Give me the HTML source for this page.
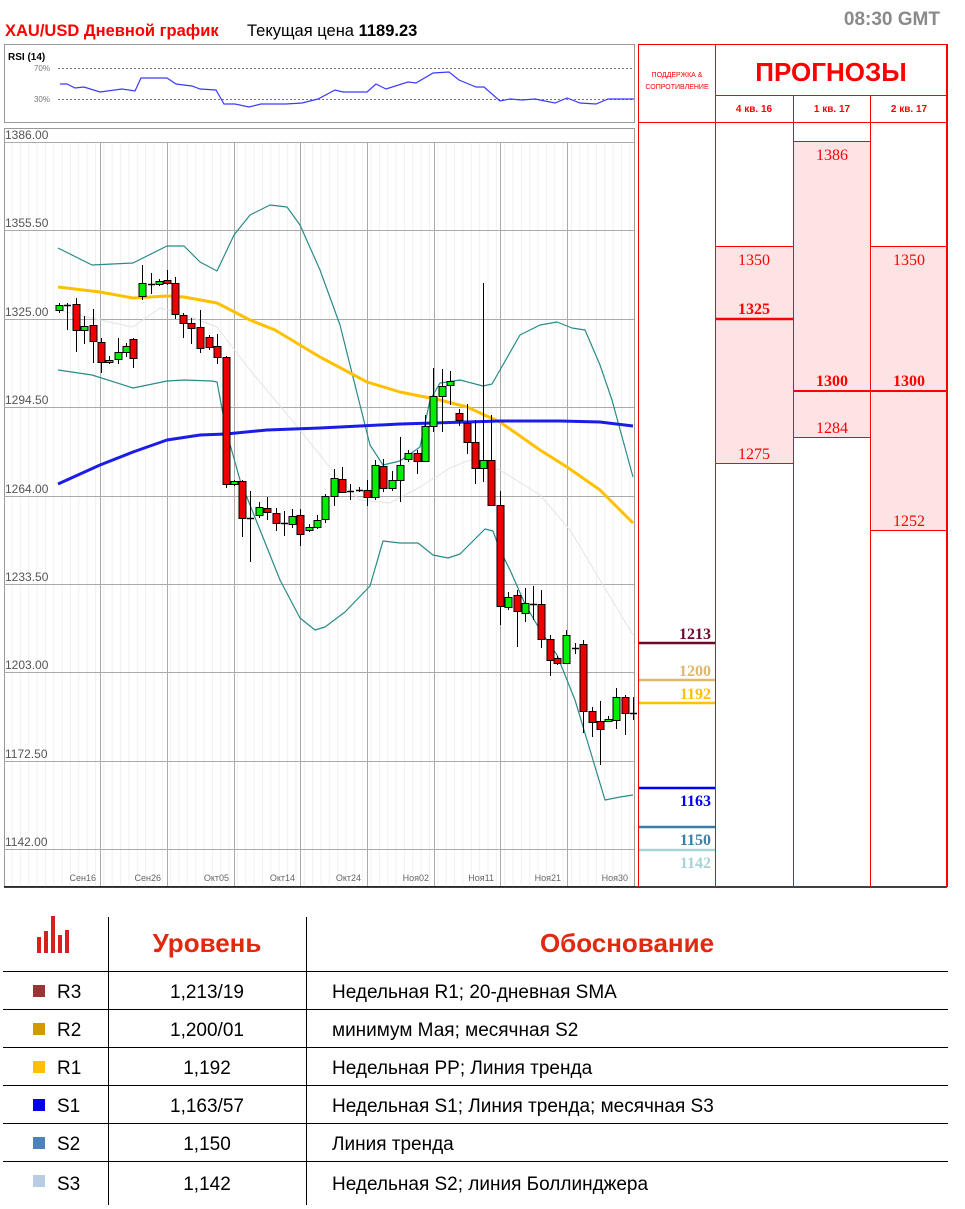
<!DOCTYPE html>
<html><head><meta charset="utf-8"><style>
html,body{margin:0;padding:0;background:#fff;width:965px;height:1209px;overflow:hidden;font-family:"Liberation Sans","DejaVu Sans",sans-serif}
svg{position:absolute;left:0;top:0}
</style></head><body>
<svg width="965" height="1209" xmlns="http://www.w3.org/2000/svg" id="s">
<text x="5" y="36" font-size="16.5" font-weight="bold" fill="#f00">XAU/USD Дневной график</text>
<text x="247" y="36" font-size="16.5" fill="#000">Текущая цена <tspan font-weight="bold">1189.23</tspan></text>
<text x="940" y="25" font-size="19" font-weight="bold" fill="#8a8a8a" text-anchor="end">08:30 GMT</text>
<!-- RSI panel -->
<rect x="4.5" y="44.5" width="630" height="78" fill="#fff" stroke="#999"/>
<text x="8" y="60" font-size="10" font-weight="bold">RSI (14)</text>
<text x="50" y="71" font-size="8" fill="#777" text-anchor="end">70%</text>
<text x="50" y="102" font-size="8" fill="#777" text-anchor="end">30%</text>
<line x1="58" y1="68.5" x2="634" y2="68.5" stroke="#777" stroke-dasharray="2,2"/>
<line x1="58" y1="99.5" x2="634" y2="99.5" stroke="#777" stroke-dasharray="2,2"/>
<polyline fill="none" stroke="#3a3aff" stroke-width="1.2" points="60,84 67,84 75,88 84,87 100,92 122,89 135,91 141,78 167,78 176,84 192,86 200,89 216,90 224,104 235,104 249,107 261,104 286,104 302,103 318,99 335,90 343,92 367,92 376,84 386,89 408,82 416,83 433,73 449,72 459,80 476,87 484,87 500,101 510,99 522,100 535,99 555,103 567,98 580,103 596,104 608,99 634,99"/>
<!-- main chart -->
<rect x="4.5" y="128.5" width="630" height="758" fill="#fff" stroke="#999"/>
<g id="grid"></g>
<g id="lines"></g>
<g id="candles"></g>
<line x1="4" y1="887" x2="947" y2="887" stroke="#000" stroke-width="1.5"/>
<!-- right panel -->
<g fill="#fde3e3">
<rect x="716" y="246" width="77" height="217"/>
<rect x="794" y="141" width="77" height="296"/>
<rect x="872" y="246" width="75" height="284"/>
</g>
<g stroke="#f00" stroke-width="1" fill="none">
<line x1="638.5" y1="44" x2="638.5" y2="887"/>
<line x1="715.5" y1="44" x2="715.5" y2="887"/>
<line x1="793.5" y1="95" x2="793.5" y2="887"/>
<line x1="870.5" y1="95" x2="870.5" y2="887"/>
<line x1="947" y1="44" x2="947" y2="887" stroke-width="2"/>
<line x1="638" y1="44.5" x2="948" y2="44.5"/>
<line x1="715" y1="95.5" x2="948" y2="95.5"/>
<line x1="638" y1="122.5" x2="948" y2="122.5"/>
<line x1="716" y1="246.5" x2="793" y2="246.5"/>
<line x1="716" y1="463.5" x2="793" y2="463.5"/>
<line x1="794" y1="141.5" x2="871" y2="141.5"/>
<line x1="794" y1="437.5" x2="871" y2="437.5"/>
<line x1="871" y1="246.5" x2="947" y2="246.5"/>
<line x1="871" y1="530.5" x2="947" y2="530.5"/>
<line x1="716" y1="319" x2="793" y2="319" stroke-width="2.5"/>
<line x1="794" y1="391" x2="947" y2="391" stroke-width="2"/>
</g>
<g fill="#f00" text-anchor="middle">
<text x="677" y="77" font-size="7">ПОДДЕРЖКА &amp;</text>
<text x="677" y="89" font-size="7">СОПРОТИВЛЕНИЕ</text>
<text x="831" y="81" font-size="26" font-weight="bold">ПРОГНОЗЫ</text>
<text x="754" y="112" font-size="10" font-weight="bold">4 кв. 16</text>
<text x="832" y="112" font-size="10" font-weight="bold">1 кв. 17</text>
<text x="909" y="112" font-size="10" font-weight="bold">2 кв. 17</text>
</g>
<g fill="#f00" text-anchor="middle" font-family="'Liberation Serif',serif" font-size="16">
<text x="754" y="265">1350</text>
<text x="754" y="314" font-weight="bold">1325</text>
<text x="754" y="459">1275</text>
<text x="832" y="160">1386</text>
<text x="832" y="386" font-weight="bold">1300</text>
<text x="832" y="433">1284</text>
<text x="909" y="265">1350</text>
<text x="909" y="386" font-weight="bold">1300</text>
<text x="909" y="526">1252</text>
</g>
<g font-family="'Liberation Serif',serif" font-size="16" font-weight="bold" text-anchor="end">
<line x1="639" y1="643" x2="715" y2="643" stroke="#6b0a2e" stroke-width="2.5"/>
<text x="711" y="639" fill="#6b0a2e">1213</text>
<line x1="639" y1="680" x2="715" y2="680" stroke="#e0b86a" stroke-width="2.5"/>
<text x="711" y="676" fill="#e0b86a">1200</text>
<line x1="639" y1="703" x2="715" y2="703" stroke="#ffc000" stroke-width="2.5"/>
<text x="711" y="699" fill="#ffc000">1192</text>
<line x1="639" y1="788" x2="715" y2="788" stroke="#0000ff" stroke-width="2.5"/>
<text x="711" y="806" fill="#0000ff">1163</text>
<line x1="639" y1="827" x2="715" y2="827" stroke="#3a7fa8" stroke-width="2.5"/>
<text x="711" y="845" fill="#3a7fa8">1150</text>
<line x1="639" y1="850" x2="715" y2="850" stroke="#a8d4d4" stroke-width="2.5"/>
<text x="711" y="868" fill="#a8d4d4">1142</text>
</g>
<!-- bottom table -->
<g stroke="#000" stroke-width="1">
<line x1="108.5" y1="917" x2="108.5" y2="1205"/>
<line x1="306.5" y1="917" x2="306.5" y2="1205"/>
<line x1="3" y1="971.5" x2="948" y2="971.5"/>
<line x1="3" y1="1009.5" x2="948" y2="1009.5"/>
<line x1="3" y1="1047.5" x2="948" y2="1047.5"/>
<line x1="3" y1="1085.5" x2="948" y2="1085.5"/>
<line x1="3" y1="1123.5" x2="948" y2="1123.5"/>
<line x1="3" y1="1161.5" x2="948" y2="1161.5"/>
</g>
<g fill="#d42020">
<rect x="37" y="937" width="4" height="16"/><rect x="44" y="931" width="4" height="22"/><rect x="51" y="916" width="4" height="37"/><rect x="58" y="935" width="4" height="18"/><rect x="65" y="930" width="4" height="23"/>
</g>
<text x="207" y="952" font-size="26" font-weight="bold" fill="#e02a10" text-anchor="middle">Уровень</text>
<text x="627" y="952" font-size="26" font-weight="bold" fill="#e02a10" text-anchor="middle">Обоснование</text>
<g font-size="19" fill="#000">
<rect x="33" y="985" width="12" height="12" fill="#953735"/><text x="57" y="998">R3</text><text x="207" y="998" text-anchor="middle">1,213/19</text><text x="332" y="998">Недельная R1; 20-дневная SMA</text>
<rect x="33" y="1023" width="12" height="12" fill="#d09a00"/><text x="57" y="1036">R2</text><text x="207" y="1036" text-anchor="middle">1,200/01</text><text x="332" y="1036">минимум Мая; месячная S2</text>
<rect x="33" y="1061" width="12" height="12" fill="#ffc000"/><text x="57" y="1074">R1</text><text x="207" y="1074" text-anchor="middle">1,192</text><text x="332" y="1074">Недельная PP; Линия тренда</text>
<rect x="33" y="1099" width="12" height="12" fill="#0000ee"/><text x="57" y="1112">S1</text><text x="207" y="1112" text-anchor="middle">1,163/57</text><text x="332" y="1112">Недельная S1; Линия тренда; месячная S3</text>
<rect x="33" y="1137" width="12" height="12" fill="#4f81bd"/><text x="57" y="1150">S2</text><text x="207" y="1150" text-anchor="middle">1,150</text><text x="332" y="1150">Линия тренда</text>
<rect x="33" y="1175" width="12" height="12" fill="#b8cce4"/><text x="57" y="1190">S3</text><text x="207" y="1190" text-anchor="middle">1,142</text><text x="332" y="1190">Недельная S2; линия Боллинджера</text>
</g>
</svg>
<script>
var NS="http://www.w3.org/2000/svg";
function el(p,t,a,txt){var e=document.createElementNS(NS,t);for(var k in a)e.setAttribute(k,a[k]);if(txt)e.textContent=txt;document.getElementById(p).appendChild(e);return e;}
for(var x=12;x<634;x+=8.35){el("grid","line",{x1:x,y1:142,x2:x,y2:887,stroke:"#f1f1f1"});}
var vx=[100,167,234,300,367,434,500,567];
vx.forEach(function(x){el("grid","line",{x1:x+.5,y1:142,x2:x+.5,y2:887,stroke:"#aaa"});});
var lbl=["1386.00","1355.50","1325.00","1294.50","1264.00","1233.50","1203.00","1172.50","1142.00"];
for(var i=0;i<9;i++){var y=142+i*88.4;el("grid","line",{x1:4,y1:Math.round(y)+.5,x2:634,y2:Math.round(y)+.5,stroke:"#aaa"});
el("grid","text",{x:5,y:Math.round(y)-3,"font-size":"12",fill:"#555"},lbl[i]);}
var dl=["Сен16","Сен26","Окт05","Окт14","Окт24","Ноя02","Ноя11","Ноя21","Ноя30"];
var dx=[96,161,229,295,361,429,494,561,628];
for(var i=0;i<9;i++)el("grid","text",{x:dx[i],y:881,"font-size":"9",fill:"#666","text-anchor":"end"},dl[i]);
function pl(pts,c,w){el("lines","polyline",{points:pts,fill:"none",stroke:c,"stroke-width":w,"stroke-linejoin":"round"});}
pl("58,310 100,320 133,327 160,308 180,313 217,327 250,370 300,430 340,480 360,500 390,503 420,487 450,468 470,460 500,470 540,495 570,530 600,580 633,635","#e4e4e4",1);
pl("58,248 92,265 133,263 167,246 184,246 200,262 217,271 234,235 250,215 270,205 287,207 300,225 320,270 340,325 370,445 383,465 400,461 420,447 430,400 440,383 460,380 483,386 492,384 500,370 520,335 540,325 557,322 572,328 585,330 600,365 612,400 633,477","#2a8a8a",1.2);
pl("58,370 92,375 133,388 167,381 184,380 212,381 217,382 226,430 240,480 260,530 280,580 300,618 315,630 325,627 345,612 370,586 383,541 400,543 418,543 433,555 448,558 460,554 475,539 485,529 493,531 500,550 510,570 525,604 540,630 557,655 575,700 590,750 605,800 620,797 633,795","#2a8a8a",1.2);
pl("58,287 100,292 133,298 167,296 184,297 217,303 250,320 275,330 300,345 320,357 367,382 400,392 440,400 467,407 500,422 540,450 567,467 600,490 633,523","#ffc000",3);
pl("58,484 100,465 133,452 167,440 200,435 226,434 267,430 320,428 400,424 500,421 560,421 600,422 633,426","#1c1ce8",3);
var C=[[59,"g",305,310,303,313],[67,"d",305,305,303,330],[76,"r",304,330,298,352],[84,"g",326,330,316,344],[93,"r",325,341,309,363],[101,"r",342,362,338,373],[109,"g",360,362,356,364],[118,"g",352,359,338,364],[126,"g",346,352,343,357],[133,"r",339,358,338,368],
[142,"g",283,296,265,300],[151,"d",284,284,273,294],[159,"g",281,284,279,286],[167,"r",280,283,270,285],[175,"r",283,314,277,319],[183,"r",315,323,313,338],[191,"r",323,328,318,344],[200,"r",327,348,310,353],[209,"r",337,347,335,350],[217,"r",346,357,334,364],
[226,"r",357,484,356,488],[234,"g",481,484,480,486],[242,"r",481,518,480,537],[250,"d",518,518,491,562],[259,"g",507,515,502,518],[267,"r",508,512,497,520],[276,"r",513,523,508,531],[284,"d",523,523,511,536],[292,"g",516,524,509,528],[300,"r",515,534,509,546],[309,"g",527,530,524,532],[317,"g",520,527,515,529],
[325,"g",496,519,494,523],[334,"g",478,496,469,506],[342,"r",479,492,467,493],[350,"d",491,491,484,500],[359,"d",490,490,487,492],[367,"r",490,497,480,506],[375,"g",465,497,460,500],[383,"r",466,488,459,492],[392,"g",480,488,471,491],[400,"g",465,480,437,502],[408,"g",453,459,450,462],[417,"r",453,461,450,474],[425,"g",426,461,415,462],
[433,"g",396,426,368,432],[442,"g",386,396,369,432],[450,"g",381,385,371,405],[459,"r",413,420,409,426],[467,"r",423,442,404,454],[475,"r",442,468,420,484],[483,"g",460,468,283,482],[491,"r",460,505,415,506],[500,"r",505,606,491,625],[508,"g",597,607,592,610],[517,"r",595,611,590,647],[525,"g",603,613,588,622],[533,"d",604,604,586,620],[541,"r",604,639,590,648],
[550,"r",639,660,635,676],[557,"r",658,663,656,665],[566,"g",635,663,630,663],[575,"d",648,648,643,654],[583,"r",644,711,640,733],[592,"r",711,722,707,737],[600,"r",721,729,701,765],[608,"g",719,720,716,722],[616,"g",697,720,688,729],[625,"r",697,713,695,735],[633,"d",713,713,697,720]];
C.forEach(function(c){
 el("candles","line",{x1:c[0]+.5,y1:c[4],x2:c[0]+.5,y2:c[5],stroke:"#000"});
 if(c[1]=="d"){el("candles","line",{x1:c[0]-3,y1:c[2]+.5,x2:c[0]+4,y2:c[2]+.5,stroke:"#000","stroke-width":1.5});}
 else el("candles","rect",{x:c[0]-3,y:c[2]+.5,width:7,height:Math.max(2,c[3]-c[2]),fill:c[1]=="g"?"#00ee00":"#ee0000",stroke:"#000"});
});
</script>
</body></html>
